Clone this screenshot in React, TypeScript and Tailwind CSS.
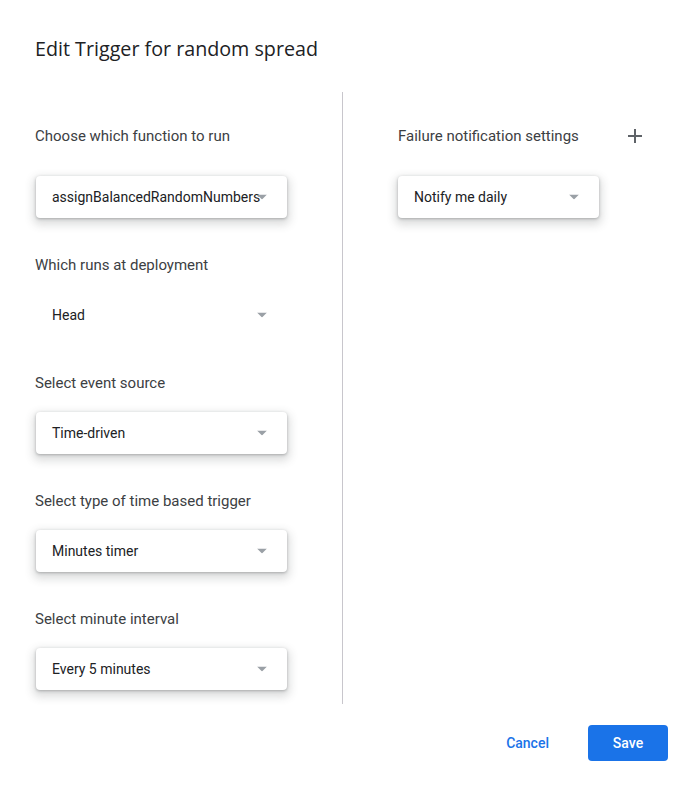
import React from "react";

function Arrow() {
  return (
    <svg width="10" height="5" viewBox="0 0 10 5" className="absolute right-[20px] top-1/2 -translate-y-1/2">
      <path d="M0 0 L10 0 L5 5 Z" fill="#9aa0a6" />
    </svg>
  );
}

function Select({ value, width = "w-[251px]", flat = false }: { value: string; width?: string; flat?: boolean }) {
  return (
    <div
      className={`relative h-[42px] ${width} rounded-[4px] bg-white flex items-center pl-[16px] text-[14px] text-[#202124] whitespace-nowrap ${
        flat ? "" : "shadow-[0_1px_3px_0_rgba(60,64,67,0.35),0_4px_8px_3px_rgba(60,64,67,0.17)]"
      }`}
    >
      <span>{value}</span>
      <Arrow />
    </div>
  );
}

function Label({ children }: { children: React.ReactNode }) {
  return <div className="h-[20px] leading-[20px] text-[15px] text-[#3c4043]">{children}</div>;
}

export default function App() {
  return (
    <div className="w-[686px] h-[785px] bg-white relative" style={{ fontFamily: "Roboto, 'Liberation Sans', sans-serif" }}>
      <div className="pt-[35px] pl-[35px] h-[92px] text-[19.7px] leading-[28px] text-[#202124]" style={{ fontFamily: "'Open Sans', Roboto, sans-serif" }}>
        Edit Trigger for random spread
      </div>
      <div className="flex">
        <div className="w-[343px] pl-[36px] pt-[34px] pb-[14px] border-r border-[#c8c6cc] flex flex-col">
          <div className="-ml-[1px]">
            <Label>Choose which function to run</Label>
          </div>
          <div className="mt-[30px]">
            <Select value="assignBalancedRandomNumbers" />
          </div>
          <div className="mt-[37px] -ml-[1px]">
            <Label>Which runs at deployment</Label>
          </div>
          <div className="mt-[19px]">
            <Select value="Head" flat />
          </div>
          <div className="mt-[37px] -ml-[1px]">
            <Label>Select event source</Label>
          </div>
          <div className="mt-[19px]">
            <Select value="Time-driven" />
          </div>
          <div className="mt-[37px] -ml-[1px]">
            <Label>Select type of time based trigger</Label>
          </div>
          <div className="mt-[19px]">
            <Select value="Minutes timer" />
          </div>
          <div className="mt-[37px] -ml-[1px]">
            <Label>Select minute interval</Label>
          </div>
          <div className="mt-[19px]">
            <Select value="Every 5 minutes" />
          </div>
        </div>
        <div className="pl-[55px] pt-[34px] flex flex-col">
          <div className="flex items-center w-[245px] justify-between">
            <Label>Failure notification settings</Label>
            <svg width="14" height="14" viewBox="0 0 14 14" className="mr-[1px]">
              <path d="M6 0h2v6h6v2H8v6H6V8H0V6h6z" fill="#5f6368" />
            </svg>
          </div>
          <div className="mt-[30px]">
            <Select value="Notify me daily" width="w-[201px]" />
          </div>
        </div>
      </div>
      <div className="flex justify-end items-center pr-[18px] mt-[21px]">
        <button className="text-[14px] font-medium text-[#1a73e8] mr-[39px]">Cancel</button>
        <button className="w-[80px] h-[36px] rounded-[4px] bg-[#1a73e8] text-white text-[14px] font-medium">Save</button>
      </div>
    </div>
  );
}
